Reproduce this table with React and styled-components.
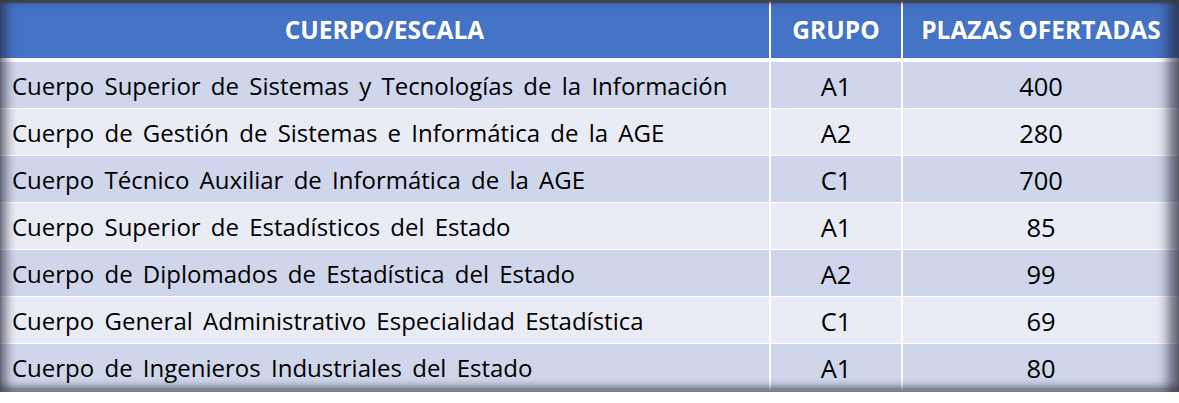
import React from "react";
import styled, { createGlobalStyle } from "styled-components";

const Global = createGlobalStyle`
  html, body { margin: 0; padding: 0; background: #ffffff; }
  body { font-family: "Open Sans", "Liberation Sans", sans-serif; }
`;

const Frame = styled.div`
  position: relative;
  width: 1179px;
  height: 392px;
  overflow: hidden;
  &::after {
    content: "";
    position: absolute;
    inset: 0;
    pointer-events: none;
    box-shadow:
      inset 0 3px 2px rgba(60, 60, 60, 0.85),
      inset 10px 0 10px -3px rgba(40, 40, 60, 0.55),
      inset -14px 0 12px -3px rgba(40, 40, 60, 0.65),
      inset 0 -8px 8px -3px rgba(40, 40, 60, 0.55);
  }
`;

const Table = styled.table`
  width: 1179px;
  border-collapse: collapse;
  table-layout: fixed;
  font-family: "Open Sans", "Liberation Sans", sans-serif;
  color: #000;
`;

const HeadCell = styled.th`
  background: #4472c4;
  color: #ffffff;
  font-weight: 700;
  font-size: 24.5px;
  line-height: 30px;
  height: 56px;
  padding: 2px 0 0;
  text-align: center;
  border-bottom: 4px solid #ffffff;
  border-left: 2px solid #ffffff;
  &:first-child { border-left: none; }
`;

const Row = styled.tr`
  background: ${(p) => (p.$odd ? "#cfd5ea" : "#e9ebf5")};
`;

const Cell = styled.td`
  height: 44px;
  line-height: 30px;
  padding: 2px 0 0 ${(p) => (p.$left ? "12px" : "0")};
  font-size: ${(p) => (p.$left ? "24px" : "25.5px")};
  text-align: ${(p) => (p.$left ? "left" : "center")};
  border-top: 1px solid #ffffff;
  border-left: 2px solid #ffffff;
  &:first-child { border-left: none; }
  white-space: nowrap;
  word-spacing: 4px;
`;

const rows = [
  ["Cuerpo Superior de Sistemas y Tecnologías de la Información", "A1", "400"],
  ["Cuerpo de Gestión de Sistemas e Informática de la AGE", "A2", "280"],
  ["Cuerpo Técnico Auxiliar de Informática de la AGE", "C1", "700"],
  ["Cuerpo Superior de Estadísticos del Estado", "A1", "85"],
  ["Cuerpo de Diplomados de Estadística del Estado", "A2", "99"],
  ["Cuerpo General Administrativo Especialidad Estadística", "C1", "69"],
  ["Cuerpo de Ingenieros Industriales del Estado", "A1", "80"],
];

export default function App() {
  return (
    <>
      <Global />
      <Frame>
        <Table>
          <colgroup>
            <col style={{ width: 770 }} />
            <col style={{ width: 132 }} />
            <col style={{ width: 277 }} />
          </colgroup>
          <thead>
            <tr>
              <HeadCell>CUERPO/ESCALA</HeadCell>
              <HeadCell>GRUPO</HeadCell>
              <HeadCell>PLAZAS OFERTADAS</HeadCell>
            </tr>
          </thead>
          <tbody>
            {rows.map((r, i) => (
              <Row key={i} $odd={i % 2 === 0}>
                <Cell $left>{r[0]}</Cell>
                <Cell>{r[1]}</Cell>
                <Cell>{r[2]}</Cell>
              </Row>
            ))}
          </tbody>
        </Table>
      </Frame>
    </>
  );
}
